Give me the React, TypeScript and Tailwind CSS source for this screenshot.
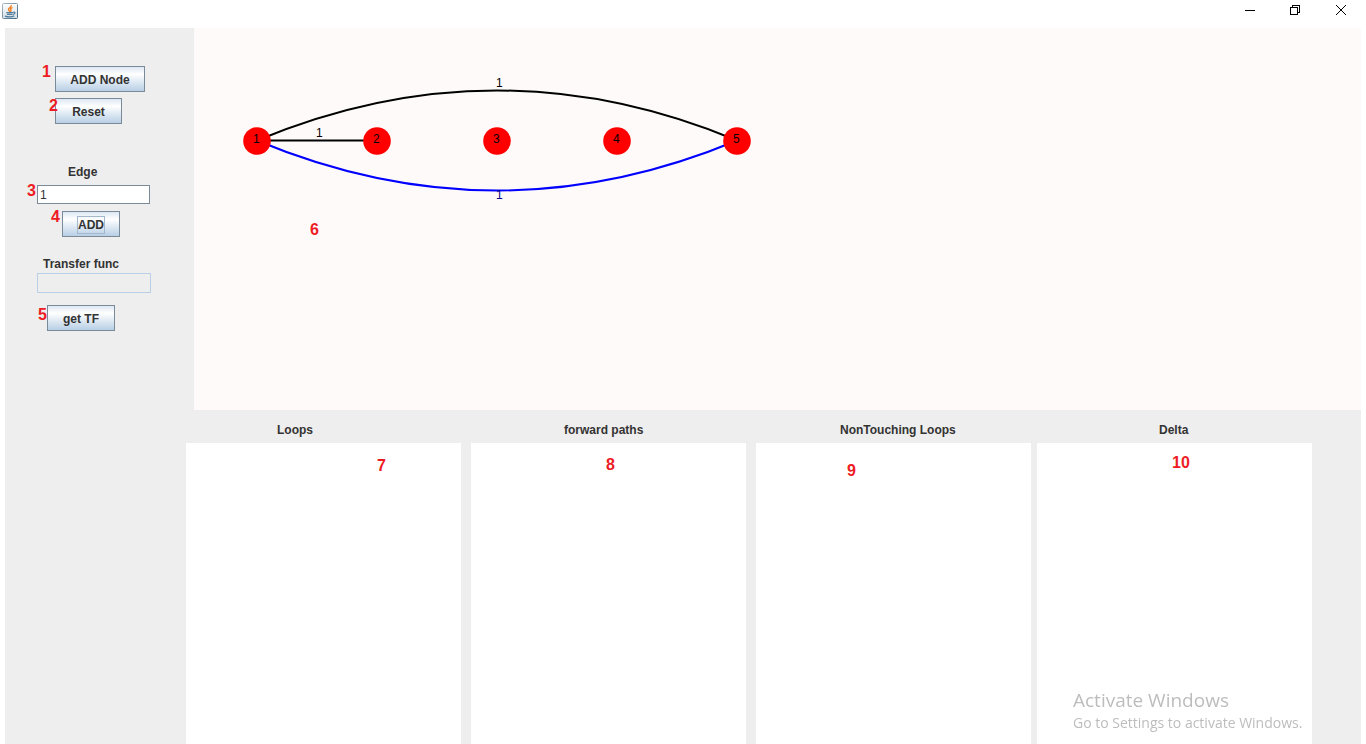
import { useState } from 'react';
import type { ReactNode } from 'react';

const nodes = [1, 2, 3, 4, 5];

const panels = [
  { id: 'loops', title: 'Loops', pad: 'pl-[91px]', gap: '', mark: 7, place: 'left-[191px] top-[13px]' },
  { id: 'paths', title: 'forward paths', pad: 'pl-[93px]', gap: 'ml-2.5', mark: 8, place: 'left-[135px] top-3' },
  { id: 'nontouching', title: 'NonTouching Loops', pad: 'pl-[84px]', gap: 'ml-2.5', mark: 9, place: 'left-[91px] top-[18px]' },
  { id: 'delta', title: 'Delta', pad: 'pl-[122px]', gap: 'ml-1.5', mark: 10, place: 'left-[135px] top-2.5' },
];

function Mark({ place, children }: { place: string; children: ReactNode }) {
  return (
    <span className={`pointer-events-none absolute text-base leading-5 font-bold text-[#ed1c24] ${place}`}>
      {children}
    </span>
  );
}

interface MetalButtonProps {
  children: ReactNode;
  width: string;
  onClick?: () => void;
  focused?: boolean;
}

function MetalButton({ children, width, onClick, focused }: MetalButtonProps) {
  return (
    <button
      type="button"
      onClick={onClick}
      className={`flex h-[26px] items-center justify-center border border-[#7a8a99] bg-linear-to-b from-[#dde8f3] via-white via-30% to-[#b8cfe5] pt-px text-xs font-bold whitespace-nowrap text-[#333] ${width}`}
    >
      {focused ? <span className="outline outline-[#a3b8cc]">{children}</span> : children}
    </button>
  );
}

function JavaIcon() {
  return (
    <svg width="16" height="16" viewBox="0 0 16 16" aria-hidden="true">
      <defs>
        <linearGradient id="tile" x1="0" y1="0" x2="0" y2="1">
          <stop offset="0" stopColor="#fff" />
          <stop offset="1" stopColor="#d3dde5" />
        </linearGradient>
        <linearGradient id="rim" x1="0" y1="0" x2="1" y2="1">
          <stop offset="0" stopColor="#a8b8c4" />
          <stop offset="1" stopColor="#3f6684" />
        </linearGradient>
      </defs>
      <rect x="0.5" y="0.5" width="15" height="15" rx="1" fill="url(#tile)" stroke="url(#rim)" />
      <path d="M9.4 2C9.8 4.2 5.9 5 6.5 6.8C6.8 7.7 8 8.2 8.1 8.8M10.6 4.6C8.6 5.2 8.2 6 8.9 7C9.3 7.6 9 8.2 8.5 8.7" fill="none" stroke="#ee7f23" strokeWidth="1.4" />
      <path d="M4.3 9.6H11M5 11.3H10.4M3 13.1C5.5 14 9.8 14 12.2 12.9M11.2 9.3C13.8 8.8 13.3 11 11 11.3" fill="none" stroke="#4f7d9e" strokeWidth="1.3" />
    </svg>
  );
}

function TitleBar() {
  return (
    <header className="flex h-7 items-start justify-between pl-0.5">
      <div className="pt-[3px]">
        <JavaIcon />
      </div>
      <div className="flex">
        <button type="button" aria-label="Minimize" className="flex h-5 w-11 items-center justify-center">
          <svg width="12" height="12" viewBox="0 0 12 12" shapeRendering="crispEdges"><path d="M1 6.5H11" stroke="#000" /></svg>
        </button>
        <button type="button" aria-label="Restore" className="flex h-5 w-[46px] items-center justify-center">
          <svg width="12" height="12" viewBox="0 0 12 12" fill="none" stroke="#000" shapeRendering="crispEdges">
            <path d="M1.5 3.5H8.5V10.5H1.5ZM3.5 3V1.5H10.5V8.5H9" />
          </svg>
        </button>
        <button type="button" aria-label="Close" className="flex h-5 w-[46px] items-center justify-center">
          <svg width="12" height="12" viewBox="0 0 12 12" stroke="#000"><path d="M1 1L11 11M11 1L1 11" /></svg>
        </button>
        <div className="w-0.5" />
      </div>
    </header>
  );
}

function Sidebar() {
  const [gain, setGain] = useState('1');
  return (
    <aside className="flex w-[181px] shrink-0 flex-col items-start pt-[38px] pl-8">
      <div className="relative ml-[18px]">
        <MetalButton width="w-[90px]">ADD Node</MetalButton>
        <Mark place="-left-[13px] -top-1">1</Mark>
      </div>
      <div className="relative mt-1.5 ml-[18px]">
        <MetalButton width="w-[67px]" onClick={() => setGain('')}>Reset</MetalButton>
        <Mark place="-left-1.5 -top-0.5">2</Mark>
      </div>
      <label htmlFor="edge" className="mt-10 ml-[31px] text-xs font-bold">Edge</label>
      <div className="relative mt-[5px]">
        <input
          id="edge"
          value={gain}
          onChange={(e) => setGain(e.target.value)}
          className="block h-[19px] w-[113px] border border-[#7a8a99] bg-white px-0.5 pt-px text-xs outline-none"
        />
        <Mark place="-left-2.5 -top-1">3</Mark>
      </div>
      <div className="relative mt-[7px] ml-[25px]">
        <MetalButton width="w-[58px]" focused>ADD</MetalButton>
        <Mark place="-left-[11px] -top-1">4</Mark>
      </div>
      <label htmlFor="transfer" className="mt-[19px] ml-1.5 text-xs font-bold">Transfer func</label>
      <input id="transfer" readOnly className="mt-px h-5 w-[114px] border border-[#b8cfe5] bg-transparent px-0.5 text-xs outline-none" />
      <div className="relative mt-3 ml-2.5">
        <MetalButton width="w-[68px]">get TF</MetalButton>
        <Mark place="-left-[9px] top-0">5</Mark>
      </div>
    </aside>
  );
}

function Graph() {
  return (
    <section aria-label="Signal flow graph" className="relative ml-2 h-[382px] overflow-hidden bg-[#fffafa]">
      <svg width="600" height="200" viewBox="0 0 600 200" className="text-xs">
        <g fill="none" strokeWidth="2">
          <path d="M63 112.5Q303 12.5 543 112.5" stroke="#000" />
          <path d="M63 112.5H183" stroke="#000" />
          <path d="M63 112.5Q303 212.5 543 112.5" stroke="#00f" />
        </g>
        <text x="302" y="59">1</text>
        <text x="122" y="109">1</text>
        <text x="302" y="171" fill="#00008b">1</text>
        {nodes.map((n, i) => (
          <g key={n}>
            <circle cx={63 + i * 120} cy="113" r="13.8" fill="#f00" />
            <text x={59 + i * 120} y="115">{n}</text>
          </g>
        ))}
      </svg>
      <Mark place="left-[116px] top-48">6</Mark>
    </section>
  );
}

export default function App() {
  return (
    <div className="flex min-h-screen flex-col bg-white font-['Liberation_Sans',Arial,sans-serif] text-[#333]">
      <TitleBar />
      <main className="mx-[5px] flex grow bg-[#eee]">
        <Sidebar />
        <div className="flex min-w-0 grow flex-col">
          <Graph />
          <div className="flex grow pr-[49px]">
            {panels.map((p) => (
              <section key={p.id} className={`flex min-w-0 flex-1 flex-col ${p.gap}`}>
                <label htmlFor={p.id} className={`pt-3 pb-[5px] text-xs font-bold ${p.pad}`}>{p.title}</label>
                <div className="relative flex grow">
                  <textarea id={p.id} readOnly className="w-full resize-none bg-white outline-none" />
                  <Mark place={p.place}>{p.mark}</Mark>
                </div>
              </section>
            ))}
          </div>
        </div>
      </main>
      <div className="pointer-events-none fixed right-14 bottom-2.5 w-[237px] font-['Open_Sans','Noto_Sans',sans-serif] text-[#bdbdbd]">
        <p className="text-[19px] leading-6">Activate Windows</p>
        <p className="text-sm leading-[22px]">Go to Settings to activate Windows.</p>
      </div>
    </div>
  );
}
